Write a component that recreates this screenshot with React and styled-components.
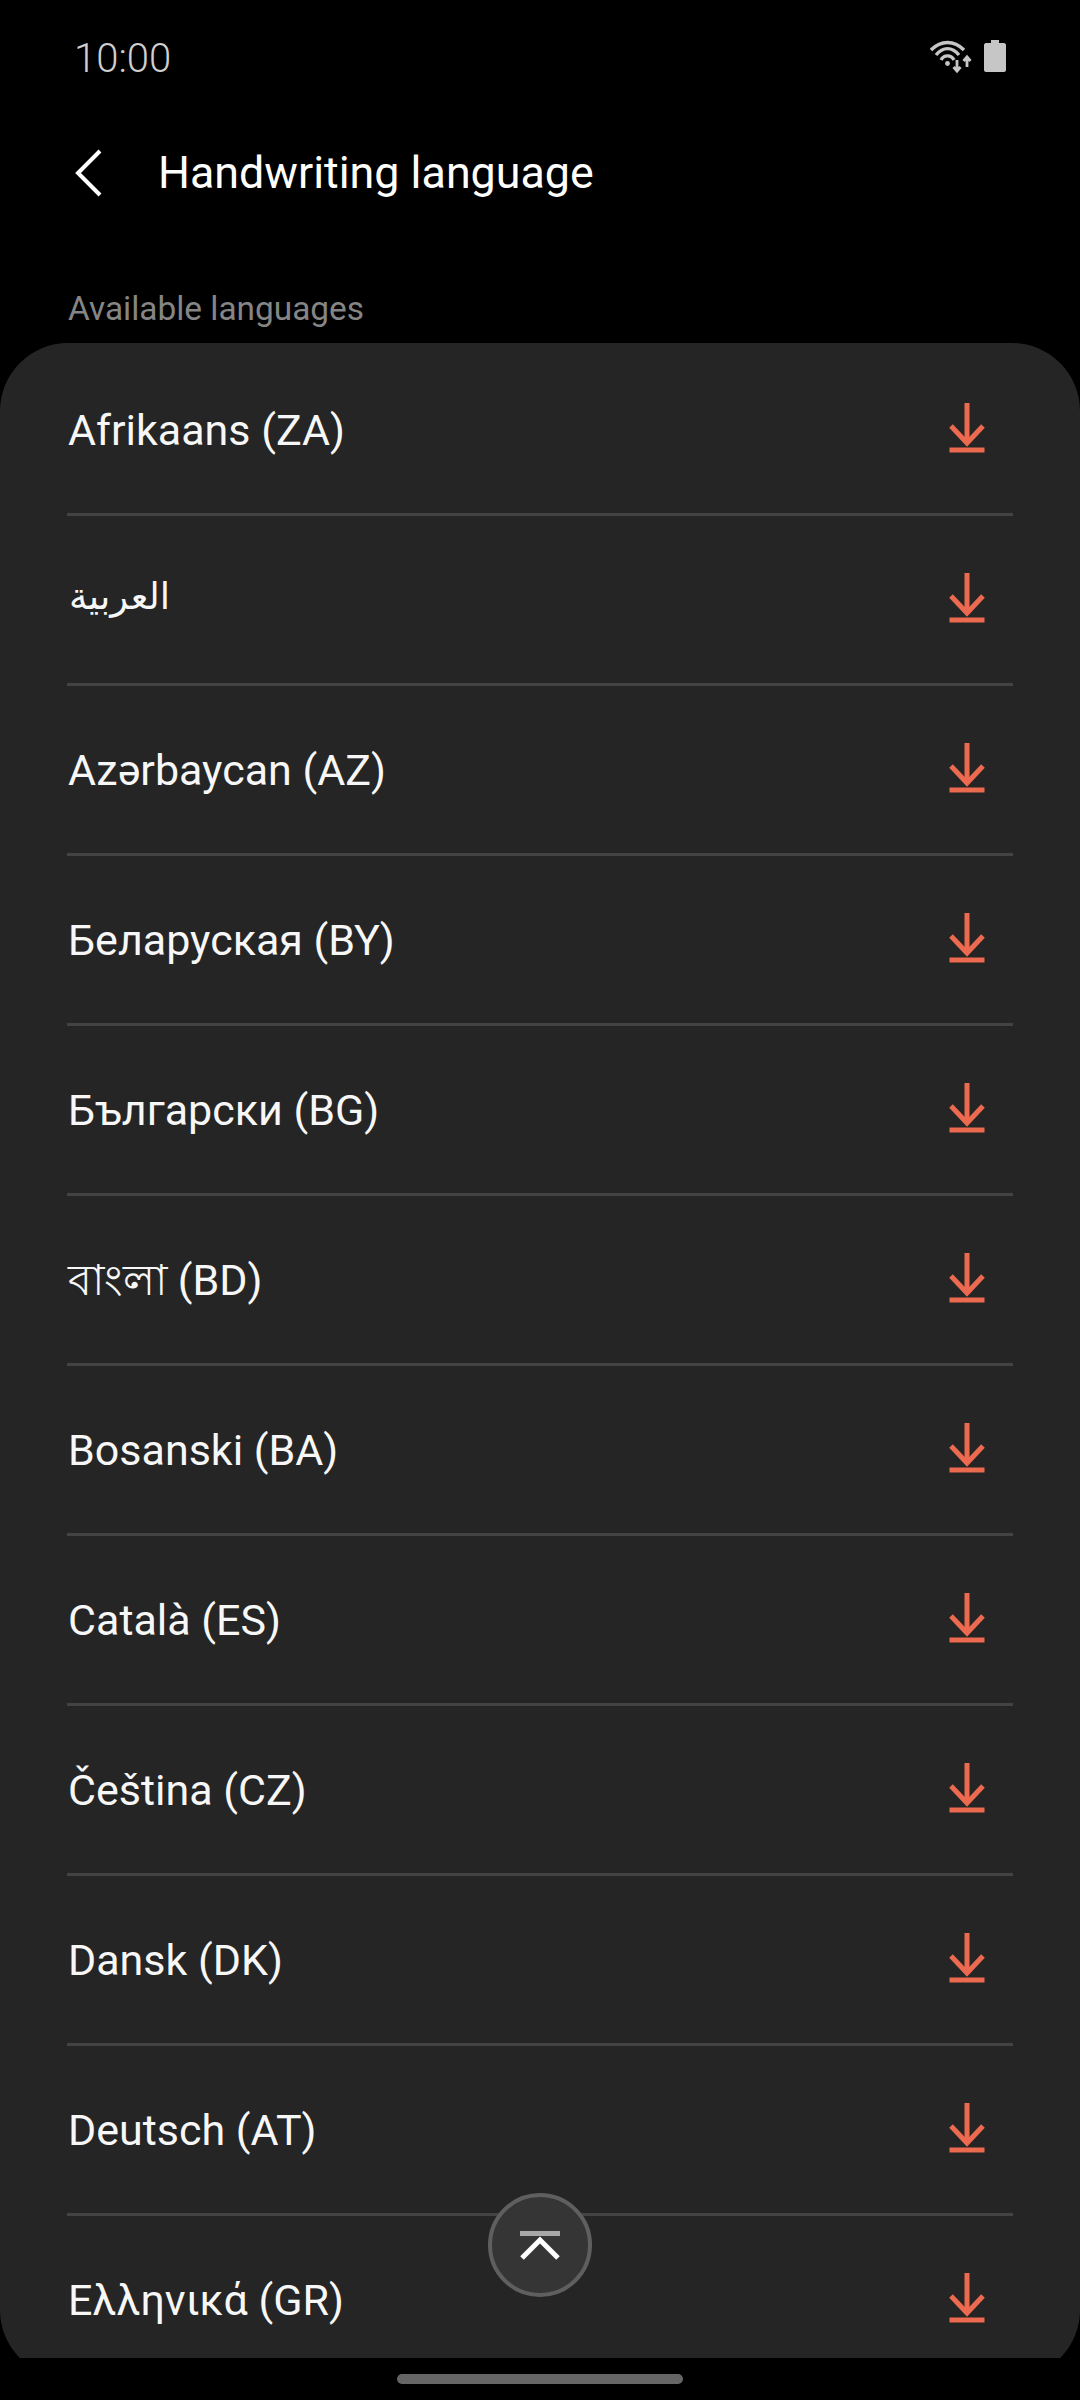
import React from "react";
import styled, { createGlobalStyle } from "styled-components";

const Global = createGlobalStyle`
  html, body { margin: 0; padding: 0; background: #000; }
  #root { width: 1080px; height: 2400px; }
`;

const Screen = styled.div`
  position: relative;
  width: 1080px;
  height: 2400px;
  overflow: hidden;
  display: flex;
  flex-direction: column;
  background: #000;
  font-family: Roboto, "Noto Sans", "DejaVu Sans", sans-serif;
  color: #fff;
`;

const StatusBar = styled.div`
  height: 116px;
  box-sizing: border-box;
  padding: 34px 74px 0 74px;
  display: flex;
  justify-content: space-between;
  align-items: flex-start;
`;

const Clock = styled.div`
  font-size: 40px;
  line-height: 48px;
  font-weight: 300;
  color: #cfcfcf;
  margin-top: 1px;
`;

const StatusIcons = styled.div`
  display: flex;
  align-items: flex-start;
  gap: 10px;
  margin-top: 6px;
`;

const TitleBar = styled.div`
  height: 114px;
  display: flex;
  align-items: center;
  padding-left: 74px;
  gap: 54px;
`;

const Title = styled.div`
  font-size: 44.8px;
  line-height: 54px;
  color: #fff;
  font-weight: 400;
`;

const SectionLabel = styled.div`
  height: 113px;
  box-sizing: border-box;
  padding: 58px 0 0 68px;
  font-size: 33.4px;
  line-height: 42px;
  color: #858585;
`;

const CardClip = styled.div`
  height: 2015px;
  overflow: hidden;
  flex: none;
`;

const Card = styled.div`
  height: 2035px;
  background: #252525;
  border-radius: 68px;
  overflow: hidden;
`;

const Row = styled.div`
  height: ${p => (p.$first ? "173px" : "170px")};
  box-sizing: border-box;
  padding: 0 56px ${p => (p.$first ? "0" : "2px")} 68px;
  display: flex;
  align-items: center;
  justify-content: space-between;
  position: relative;
  &::after {
    content: "";
    position: absolute;
    left: 67px;
    right: 67px;
    bottom: 0;
    height: 3px;
    background: #434343;
    display: ${p => (p.$last ? "none" : "block")};
  }
`;

const Name = styled.div`
  font-size: 43px;
  line-height: 56px;
  color: #f7f7f7;
  ${p => p.$rtl && "font-size: 37px; font-family: 'DejaVu Sans', sans-serif; padding: 0 0 6px 1px;"}
`;

const IconSlot = styled.div`
  width: 96px;
  height: 56px;
  display: flex;
  align-items: center;
  justify-content: center;
  margin-right: 9px;
`;

const ScrollTop = styled.div`
  position: absolute;
  left: 488px;
  top: 2193px;
  width: 104px;
  height: 104px;
  box-sizing: border-box;
  border-radius: 50%;
  border: 4px solid #5f5f5f;
  background: #353535;
  display: flex;
  align-items: center;
  justify-content: center;
`;

const NavHandle = styled.div`
  position: absolute;
  left: 397px;
  top: 2374px;
  width: 286px;
  height: 10px;
  border-radius: 5px;
  background: #666;
`;

const languages = [
  "Afrikaans (ZA)",
  "العربية",
  "Azərbaycan (AZ)",
  "Беларуская (BY)",
  "Български (BG)",
  "বাংলা (BD)",
  "Bosanski (BA)",
  "Català (ES)",
  "Čeština (CZ)",
  "Dansk (DK)",
  "Deutsch (AT)",
  "Ελληνικά (GR)",
];

const Download = () => (
  <svg width="40" height="56" viewBox="0 0 40 56" fill="none" stroke="#ec6a4f" strokeWidth="5">
    <path d="M20 1V41" />
    <path d="M4 24L20 41L36 24" />
    <path d="M2.5 48H37.5" />
  </svg>
);

const Back = () => (
  <svg width="30" height="48" viewBox="0 0 30 48" fill="none" stroke="#fff" strokeWidth="4">
    <path d="M26 2L4 24L26 46" />
  </svg>
);

const Wifi = () => (
  <svg width="44" height="40" viewBox="0 0 44 40" fill="none" stroke="#c6c6c6" strokeWidth="3.4">
    <path d="M1 10C11 0 24 0 34 10" />
    <path d="M6 15C13 6.5 22 6.5 29 15" />
    <path d="M11 20C14 14.5 21 14.5 24 20" />
    <circle cx="17.5" cy="23.5" r="2.4" fill="#c6c6c6" stroke="none" />
    <path d="M27 20V31M23.5 27L27 31L30.5 27" strokeWidth="2.8" />
    <path d="M37 27V17M33.5 21L37 17L40.5 21" strokeWidth="2.8" />
  </svg>
);

const Battery = () => (
  <svg width="22" height="32" viewBox="0 0 22 32">
    <path d="M7 0H15V3H20C21 3 22 4 22 5V30C22 31 21 32 20 32H2C1 32 0 31 0 30V5C0 4 1 3 2 3H7Z" fill="#c6c6c6" />
  </svg>
);

const TopIcon = () => (
  <svg width="44" height="40" viewBox="0 0 44 40" fill="none">
    <path d="M2 8.5H42" stroke="#a8a8a8" strokeWidth="5" />
    <path d="M4 33L22 15L40 33" stroke="#fff" strokeWidth="5" />
  </svg>
);

export default function App() {
  return (
    <Screen>
      <Global />
      <StatusBar>
        <Clock>10:00</Clock>
        <StatusIcons>
          <Wifi />
          <Battery />
        </StatusIcons>
      </StatusBar>
      <TitleBar>
        <Back />
        <Title>Handwriting language</Title>
      </TitleBar>
      <SectionLabel>Available languages</SectionLabel>
      <CardClip>
        <Card>
          {languages.map((name, i) => (
            <Row key={name} $first={i === 0} $last={i === languages.length - 1}>
              <Name $rtl={i === 1}>{name}</Name>
              <IconSlot>
                <Download />
              </IconSlot>
            </Row>
          ))}
        </Card>
      </CardClip>
      <ScrollTop>
        <TopIcon />
      </ScrollTop>
      <NavHandle />
    </Screen>
  );
}
